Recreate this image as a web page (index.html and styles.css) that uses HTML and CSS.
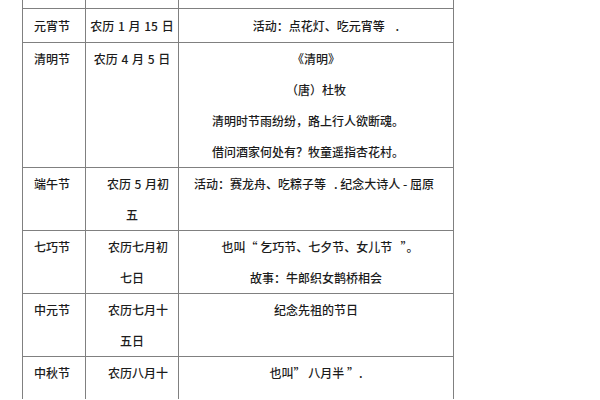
FILE: index.html
```html
<!DOCTYPE html>
<html lang="zh">
<head>
<meta charset="utf-8">
<link rel="stylesheet" href="styles.css">
</head>
<body>
<table class="fest">
  <colgroup>
    <col class="c-name">
    <col class="c-date">
    <col class="c-desc">
  </colgroup>
  <tr class="r-cut"><td></td><td></td><td></td></tr>
  <tr class="r-one">
    <td class="name">元宵节</td>
    <td class="date">农历 1 月 15 日</td>
    <td class="desc"><div class="ln shift-r">活动：点花灯、吃元宵等&nbsp;&nbsp;&nbsp;&nbsp;.</div></td>
  </tr>
  <tr>
    <td class="name">清明节</td>
    <td class="date">农历 4 月 5 日</td>
    <td class="desc">
      <div class="ln">《清明》</div>
      <div class="ln">（唐）杜牧</div>
      <div class="ln poem">清明时节雨纷纷，路上行人欲断魂。</div>
      <div class="ln poem">借问酒家何处有？牧童遥指杏花村。</div>
    </td>
  </tr>
  <tr>
    <td class="name">端午节</td>
    <td class="date"><div class="ln ind">农历 5 月初</div><div class="ln">五</div></td>
    <td class="desc"><div class="ln shift-l">活动：赛龙舟、吃粽子等&nbsp;&nbsp;&nbsp;. 纪念大诗人 - 屈原</div></td>
  </tr>
  <tr>
    <td class="name">七巧节</td>
    <td class="date"><div class="ln ind">农历七月初</div><div class="ln">七日</div></td>
    <td class="desc">
      <div class="ln shift-s">也叫“ 乞巧节、七夕节、女儿节&nbsp;&nbsp;&nbsp;”。</div>
      <div class="ln">故事：牛郎织女鹊桥相会</div>
    </td>
  </tr>
  <tr>
    <td class="name">中元节</td>
    <td class="date"><div class="ln ind">农历七月十</div><div class="ln">五日</div></td>
    <td class="desc"><div class="ln">纪念先祖的节日</div></td>
  </tr>
  <tr class="r-last">
    <td class="name">中秋节</td>
    <td class="date"><div class="ln ind">农历八月十</div></td>
    <td class="desc"><div class="ln">也叫” 八月半 ”.</div></td>
  </tr>
</table>
</body>
</html>
```

FILE: styles.css
```css
html, body {
  margin: 0;
  padding: 0;
  background: #ffffff;
}
body {
  width: 600px;
  height: 400px;
  overflow: hidden;
  font-family: "Noto Sans CJK SC", "Noto Sans", sans-serif;
  font-size: 12px;
  font-weight: 500;
  color: #1c1c1c;
}
.fest {
  border-collapse: collapse;
  margin: -1px 0 0 22px;
  width: 431px;
  table-layout: fixed;
}
.c-name { width: 63px; }
.c-date { width: 93px; }
.c-desc { width: 275px; }
.fest td {
  border: 1px solid #808080;
  padding: 0;
  vertical-align: top;
  line-height: 31px;
}
.r-cut td {
  height: 8px;
  line-height: 8px;
}
.r-one td {
  padding-top: 1px;
  padding-bottom: 1px;
}
.r-last td {
  height: 41px;
  border-bottom-color: transparent;
}
.name {
  padding-left: 11px !important;
  text-align: left;
}
.date {
  text-align: center;
  white-space: nowrap;
  word-spacing: 1px;
}
.desc {
  text-align: center;
  white-space: nowrap;
}
.ln {
  height: 31px;
}
.ind {
  text-indent: 12px;
}
.poem {
  padding-right: 16px;
}
.shift-r {
  padding-left: 20px;
}
.shift-l {
  padding-right: 4px;
}
.shift-s {
  padding-left: 8px;
}
```
